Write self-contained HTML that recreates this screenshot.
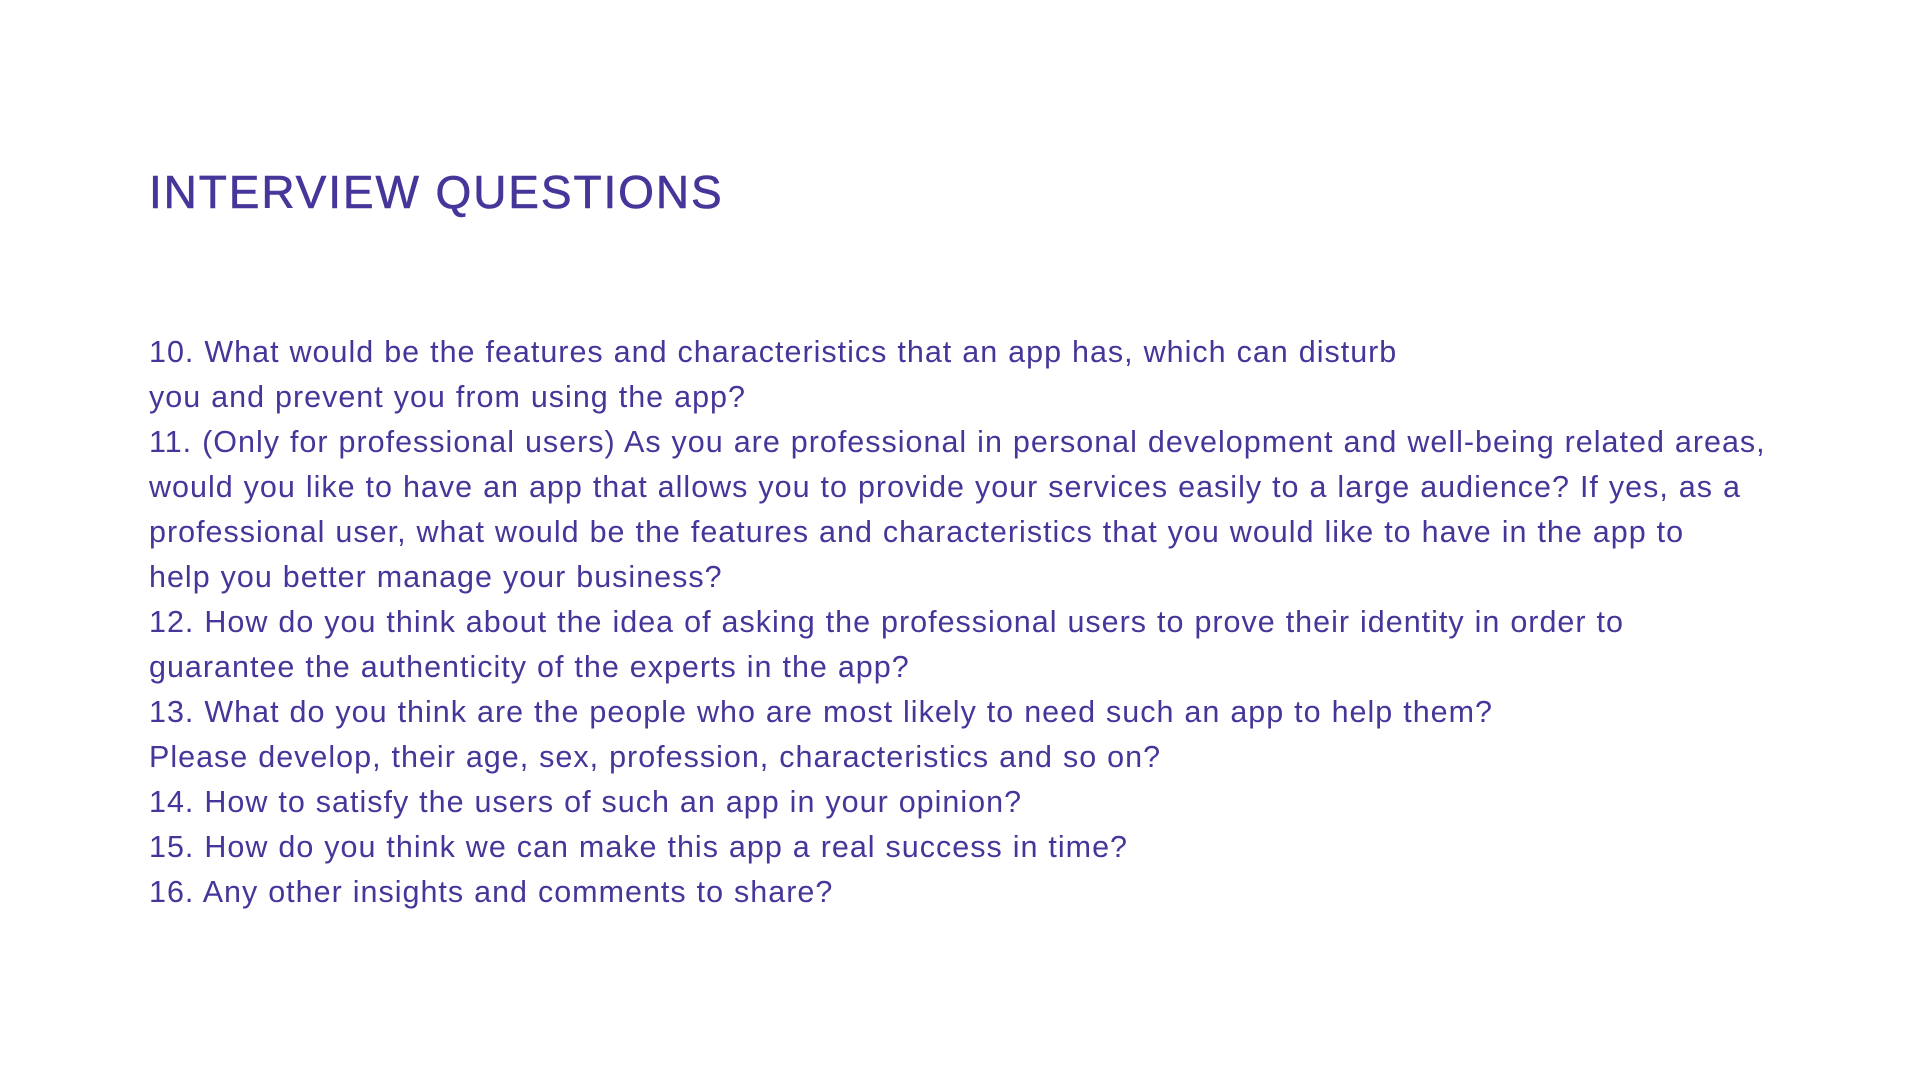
<!DOCTYPE html>
<html><head><style>
body{margin:0;width:1920px;height:1080px;background:#fff;font-family:"Liberation Sans",sans-serif;color:#45379a;}
h1{position:absolute;left:149px;top:167px;margin:0;font-size:46px;font-weight:normal;letter-spacing:1.9px;line-height:50px;-webkit-text-stroke:0.6px #45379a;}
.b{position:absolute;left:149px;top:330px;font-size:30.5px;line-height:45px;white-space:nowrap;letter-spacing:1px;word-spacing:0.5px;}
</style></head><body>
<h1>INTERVIEW QUESTIONS</h1>
<div class="b">
10. What would be the features and characteristics that an app has, which can disturb<br>
you and prevent you from using the app?<br>
11. (Only for professional users) As you are professional in personal development and well-being related areas,<br>
would you like to have an app that allows you to provide your services easily to a large audience? If yes, as a<br>
professional user, what would be the features and characteristics that you would like to have in the app to<br>
help you better manage your business?<br>
12. How do you think about the idea of asking the professional users to prove their identity in order to<br>
guarantee the authenticity of the experts in the app?<br>
13. What do you think are the people who are most likely to need such an app to help them?<br>
Please develop, their age, sex, profession, characteristics and so on?<br>
14. How to satisfy the users of such an app in your opinion?<br>
15. How do you think we can make this app a real success in time?<br>
16. Any other insights and comments to share?
</div>
</body></html>
